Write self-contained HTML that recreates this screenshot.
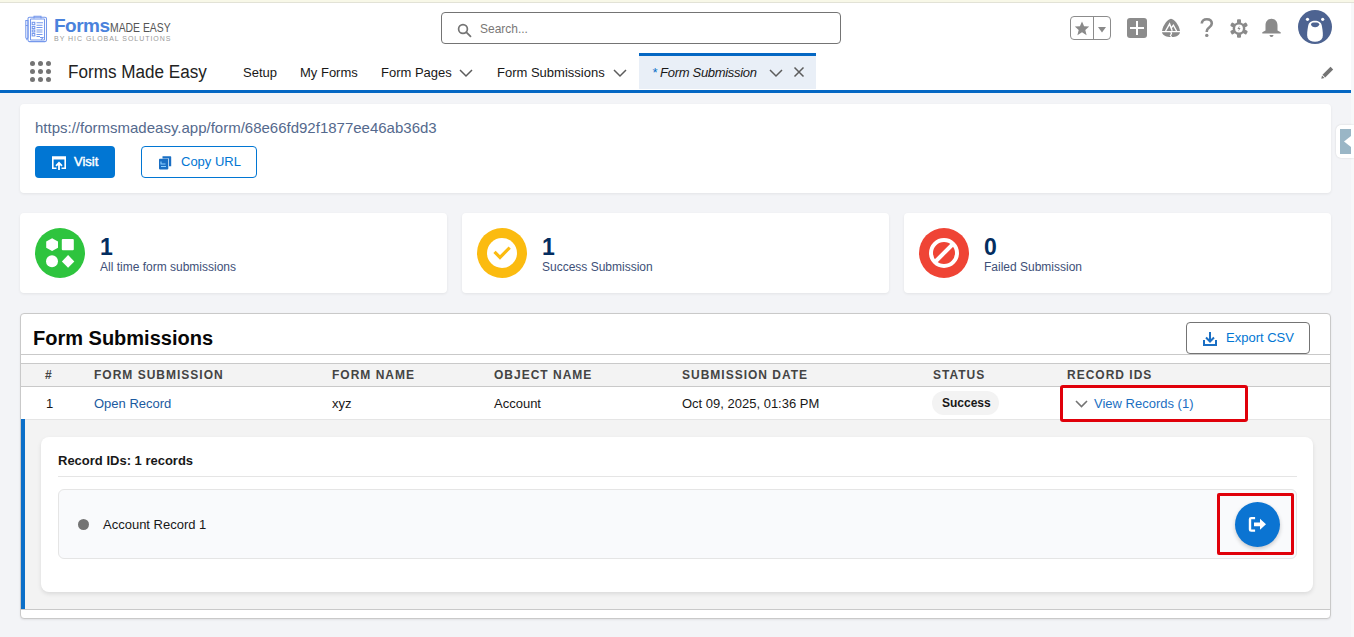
<!DOCTYPE html>
<html><head><meta charset="utf-8">
<style>
*{box-sizing:border-box;margin:0;padding:0}
html,body{width:1354px;height:637px;overflow:hidden}
body{font-family:"Liberation Sans",sans-serif;background:#f3f4f7;position:relative;color:#181818}
.abs{position:absolute}
svg{position:absolute;overflow:visible}
#topline{left:0;top:0;width:1354px;height:3px;background:#f8f8e8;border-bottom:1px solid #e2e2d6}
#header{left:0;top:3px;width:1351px;height:87px;background:#fff}
#blueline{left:0;top:90px;width:1351px;height:3px;background:#0467c3}
#rstrip{left:1351px;top:3px;width:3px;height:634px;background:#f7f8f9}
.card{background:#fff;border-radius:4px;box-shadow:0 1px 3px rgba(0,0,0,.07)}
.txt{white-space:nowrap;line-height:1}
.nav{font-size:13px;color:#181818;top:66px}
.th{font-size:12px;font-weight:bold;color:#444;letter-spacing:1px;top:369px}
.td{font-size:13px;color:#181818;top:397px}
.num{font-size:23px;font-weight:bold;color:#032d60;top:236px}
.lbl{font-size:12px;color:#3e5078;top:261px}
</style></head>
<body>
<div class="abs" id="topline"></div>
<div class="abs" id="header"></div>
<div class="abs" id="blueline"></div>
<div class="abs" id="rstrip"></div>

<!-- Logo icon -->
<svg style="left:24px;top:15px" width="24" height="28" viewBox="0 0 24 28">
  <g fill="none" stroke="#7598ec" stroke-width="1.05">
    <rect x="4" y="2.2" width="18.5" height="24.4" rx="1.5"/>
    <rect x="6.5" y="4" width="14" height="21" rx="0.5"/>
    <path d="M10 3.5 V1.2 H17 V3.5"/>
    <path d="M1.8 5.5 H4 V22.5 L2.9 24.5 L1.8 22.5 Z"/>
    <path d="M1.8 10.5 H4"/>
    <rect x="8.2" y="7.3" width="2.6" height="2.4"/>
    <rect x="8.2" y="11.5" width="2.6" height="2"/>
    <rect x="8.2" y="15" width="2.6" height="2"/>
    <rect x="8.2" y="18.5" width="2.6" height="2.4"/>
    <path d="M12.5 7.8 H19 M12.5 10.3 H18.5 M12.5 12.5 H18.5 M12.5 15 H18.5 M12.5 17 H18.5 M12.5 19.5 H18.5 M12.5 21.5 H16"/>
    <path d="M16 22.5 L19 22.5 L17 25"/>
  </g>
</svg>
<!-- Logo text -->
<div class="abs txt" style="left:54px;top:16px;font-size:19px;font-weight:bold;color:#4a82dc;letter-spacing:-0.5px">Forms</div>
<div class="abs txt" style="left:110px;top:21px;font-size:13px;color:#555;transform:scaleX(0.8);transform-origin:0 0">MADE EASY</div>
<div class="abs txt" style="left:54px;top:35px;font-size:7px;color:#9a9a9a;letter-spacing:0.96px">BY HIC GLOBAL SOLUTIONS</div>

<!-- Search -->
<div class="abs" style="left:441px;top:12px;width:400px;height:32px;border:1px solid #747474;border-radius:4px;background:#fff"></div>
<svg style="left:457px;top:23px" width="15" height="14" viewBox="0 0 15 14">
  <circle cx="6" cy="6" r="4.4" fill="none" stroke="#747474" stroke-width="1.7"/>
  <path d="M9.2 9.2 L13.5 13.3" stroke="#747474" stroke-width="1.8" stroke-linecap="round"/>
</svg>
<div class="abs txt" style="left:480px;top:22px;font-size:13px;color:#7a7876;transform:scaleX(0.92);transform-origin:0 0">Search...</div>

<!-- Header right icons -->
<div class="abs" style="left:1070px;top:16px;width:41px;height:24px;border:1px solid #8c8c8c;border-radius:4px"></div>
<div class="abs" style="left:1093px;top:16px;width:1px;height:24px;background:#8c8c8c"></div>
<svg style="left:1074px;top:21px" width="16" height="15" viewBox="0 0 16 15">
  <path d="M8 0.5 L10.1 5.3 L15.2 5.6 L11.3 8.9 L12.6 14.2 L8 11.3 L3.4 14.2 L4.7 8.9 L0.8 5.6 L5.9 5.3 Z" fill="#8a8a8a"/>
</svg>
<svg style="left:1098px;top:27px" width="8" height="6" viewBox="0 0 8 6"><path d="M0 0 H8 L4 5.5 Z" fill="#8a8a8a"/></svg>

<div class="abs" style="left:1127px;top:18px;width:20px;height:20px;background:#8c8c8c;border-radius:3px"></div>
<div class="abs" style="left:1136px;top:21px;width:2px;height:14px;background:#fff"></div>
<div class="abs" style="left:1130px;top:27px;width:14px;height:2px;background:#fff"></div>

<svg style="left:1161px;top:18px" width="20" height="20" viewBox="0 0 20 20">
  <path d="M10 0.8 C13.5 1.5 18 7 19 13 H1 C2 7 6.5 1.5 10 0.8 Z" fill="#8a8a8a"/>
  <path d="M1 14.2 H9.3 L9.8 15.8 L8.6 17.4 L10 19 C6 19 1.6 17.5 1 14.2 Z" fill="#8a8a8a"/>
  <path d="M10.6 14.2 H19 C18.4 17.5 14.5 19 11.2 19 L10 17.4 L11.2 15.8 Z" fill="#8a8a8a"/>
  <path d="M4.6 13 L8.6 6 L11.2 12.8 M10.2 10.2 L12.4 7.2 L15.6 13" fill="none" stroke="#fff" stroke-width="1.4"/>
</svg>

<svg style="left:1200px;top:18px" width="14" height="20" viewBox="0 0 14 20">
  <path d="M1.8 5.5 C1.8 2.8 3.8 1.3 6.8 1.3 C9.8 1.3 11.8 3 11.8 5.6 C11.8 8 10.2 8.9 8.6 10 C7.3 10.9 6.8 11.6 6.8 13.2 V14" fill="none" stroke="#8a8a8a" stroke-width="2.6"/>
  <circle cx="6.8" cy="17.4" r="1.7" fill="#8a8a8a"/>
</svg>

<svg style="left:1230px;top:19px" width="18" height="19" viewBox="0 0 18 19">
  <g fill="#8a8a8a">
    <circle cx="9" cy="9.5" r="6.3"/>
    <rect x="7" y="0.3" width="4" height="4" rx="1"/>
    <rect x="7" y="14.7" width="4" height="4" rx="1"/>
    <rect x="7" y="0.3" width="4" height="4" rx="1" transform="rotate(60 9 9.5)"/>
    <rect x="7" y="14.7" width="4" height="4" rx="1" transform="rotate(60 9 9.5)"/>
    <rect x="7" y="0.3" width="4" height="4" rx="1" transform="rotate(-60 9 9.5)"/>
    <rect x="7" y="14.7" width="4" height="4" rx="1" transform="rotate(-60 9 9.5)"/>
  </g>
  <circle cx="9" cy="9.5" r="3.9" fill="#fff"/>
  <path d="M9.6 6.5 L7.4 9.9 H9 L8.2 12.6 L10.6 9 H9.1 Z" fill="#8a8a8a"/>
</svg>

<svg style="left:1262px;top:18px" width="19" height="20" viewBox="0 0 19 20">
  <path d="M9.5 0.8 C5.8 0.8 3.5 3.6 3.5 7.5 V12.5 L0.3 14.2 V15.6 H18.7 V14.2 L15.5 12.5 V7.5 C15.5 3.6 13.2 0.8 9.5 0.8 Z" fill="#8a8a8a"/>
  <path d="M7.5 17 H11.5 C11.2 18.4 10.4 19 9.5 19 C8.6 19 7.8 18.4 7.5 17 Z" fill="#8a8a8a"/>
</svg>

<svg style="left:1298px;top:10px" width="34" height="34" viewBox="0 0 34 34">
  <circle cx="17" cy="17" r="17" fill="#4d6391"/>
  <circle cx="9.5" cy="9.3" r="1.6" fill="#fff"/>
  <circle cx="24.7" cy="9.3" r="1.6" fill="#fff"/>
  <path d="M17 10.8 C20.5 10.8 23.3 12.3 23.9 16 C24.7 21 25.3 25 24.5 27.5 C23.5 30.5 20.5 31.8 17 31.8 C13.5 31.8 10.5 30.5 9.5 27.5 C8.7 25 9.3 21 10.1 16 C10.7 12.3 13.5 10.8 17 10.8 Z" fill="#fff"/>
  <path d="M13 14.2 C13 12.8 15 12.4 17.1 12.4 C19.2 12.4 21.2 12.8 21.2 14.2 C21.2 15.8 19 17.3 17.1 17.3 C15.2 17.3 13 15.8 13 14.2 Z" fill="#4d6391"/>
</svg>

<!-- Nav -->
<svg style="left:30px;top:61px" width="22" height="21" viewBox="0 0 22 21">
  <g fill="#747474">
    <circle cx="2.5" cy="2.5" r="2.5"/><circle cx="10.5" cy="2.5" r="2.5"/><circle cx="18.5" cy="2.5" r="2.5"/>
    <circle cx="2.5" cy="10.5" r="2.5"/><circle cx="10.5" cy="10.5" r="2.5"/><circle cx="18.5" cy="10.5" r="2.5"/>
    <circle cx="2.5" cy="18.5" r="2.5"/><circle cx="10.5" cy="18.5" r="2.5"/><circle cx="18.5" cy="18.5" r="2.5"/>
  </g>
</svg>
<div class="abs txt" style="left:68px;top:63px;font-size:18px;color:#222;transform:scaleX(0.95);transform-origin:0 0">Forms Made Easy</div>
<div class="abs txt nav" style="left:243px">Setup</div>
<div class="abs txt nav" style="left:300px">My Forms</div>
<div class="abs txt nav" style="left:381px">Form Pages</div>
<svg style="left:459px;top:69px" width="14" height="8" viewBox="0 0 14 8"><path d="M1 1 L7 7 L13 1" fill="none" stroke="#5c5c5c" stroke-width="1.5"/></svg>
<div class="abs txt nav" style="left:497px">Form Submissions</div>
<svg style="left:613px;top:69px" width="14" height="8" viewBox="0 0 14 8"><path d="M1 1 L7 7 L13 1" fill="none" stroke="#5c5c5c" stroke-width="1.5"/></svg>
<div class="abs" style="left:639px;top:53px;width:177px;height:36px;background:#e9eff7;border-top:3px solid #0467c3"></div>
<div class="abs txt nav" style="left:652px;font-style:italic;letter-spacing:-0.3px"><span style="color:#0b6fc8">*</span> Form Submission</div>
<svg style="left:769px;top:69px" width="14" height="8" viewBox="0 0 14 8"><path d="M1 1 L7 7 L13 1" fill="none" stroke="#5c5c5c" stroke-width="1.5"/></svg>
<svg style="left:794px;top:67px" width="10" height="10" viewBox="0 0 10 10"><path d="M0.5 0.5 L9.5 9.5 M9.5 0.5 L0.5 9.5" stroke="#5c5c5c" stroke-width="1.5"/></svg>
<svg style="left:1321px;top:66px" width="13" height="13" viewBox="0 0 13 13">
  <path d="M9.5 0.8 L12.2 3.5 L4.2 11.5 L1.5 8.8 Z" fill="#747474"/>
  <path d="M1 9.5 L3.5 12 L0.3 12.7 Z" fill="#747474"/>
</svg>

<!-- URL card -->
<div class="abs card" style="left:20px;top:104px;width:1311px;height:89px"></div>
<div class="abs txt" style="left:35px;top:120px;font-size:15px;color:#54698d">https://formsmadeasy.app/form/68e66fd92f1877ee46ab36d3</div>
<div class="abs" style="left:35px;top:146px;width:80px;height:32px;background:#0176d3;border-radius:4px"></div>
<svg style="left:52px;top:156px" width="14" height="14" viewBox="0 0 14 14">
  <path d="M4.5 12.2 H0.8 V1 H13.2 V12.2 H9.5" fill="none" stroke="#fff" stroke-width="1.6"/>
  <path d="M0.8 1 H13.2 V3.5 H0.8 Z" fill="#fff"/>
  <path d="M7 14 V7.5 M4 9.8 L7 6.8 L10 9.8" fill="none" stroke="#fff" stroke-width="1.8"/>
</svg>
<div class="abs txt" style="left:74px;top:155px;font-size:13px;color:#fff;-webkit-text-stroke:0.45px #fff">Visit</div>
<div class="abs" style="left:141px;top:146px;width:116px;height:32px;border:1px solid #0176d3;border-radius:4px;background:#fff"></div>
<svg style="left:159px;top:156px" width="13" height="14" viewBox="0 0 13 14">
  <path d="M3.5 0.3 H11.5 Q12.2 0.3 12.2 1 V10.2 H10 V2.5 H3.5 Z" fill="#1a6fc4"/>
  <rect x="0" y="2.8" width="9.3" height="10.6" rx="0.8" fill="#1a6fc4"/>
  <path d="M2 5.5 V8 H6.5 M2 10.5 H7" stroke="#8fd0ff" stroke-width="1.1" fill="none"/>
</svg>
<div class="abs txt" style="left:181px;top:155px;font-size:13px;color:#0176d3">Copy URL</div>

<!-- side tab -->
<div class="abs" style="left:1336px;top:125px;width:18px;height:33px;background:#fff;border-radius:5px 0 0 5px;box-shadow:0 0 2px rgba(0,0,0,.15)"></div>
<div class="abs" style="left:1340px;top:129px;width:11px;height:25px;background:#9ab6c6"></div>
<svg style="left:1344px;top:136px" width="7" height="11" viewBox="0 0 7 11"><path d="M7 0 V11 L0 5.5 Z" fill="#fff"/></svg>

<!-- stats -->
<div class="abs card" style="left:20px;top:213px;width:427px;height:80px"></div>
<div class="abs card" style="left:462px;top:213px;width:427px;height:80px"></div>
<div class="abs card" style="left:904px;top:213px;width:427px;height:80px"></div>

<svg style="left:35px;top:228px" width="50" height="50" viewBox="0 0 50 50">
  <circle cx="25" cy="25" r="25" fill="#2ec43e"/>
  <path d="M17.1 10.3 L23 13.6 V19.8 L17.1 23 L11.2 19.8 V13.6 Z" fill="#fff"/>
  <rect x="26.8" y="11" width="12" height="11.3" rx="1" fill="#fff"/>
  <circle cx="17" cy="33.2" r="6" fill="#fff"/>
  <path d="M33.1 27.1 L39.3 33.4 L33.1 39.7 L26.9 33.4 Z" fill="#fff"/>
</svg>
<div class="abs txt num" style="left:100px">1</div>
<div class="abs txt lbl" style="left:100px">All time form submissions</div>

<svg style="left:477px;top:228px" width="50" height="50" viewBox="0 0 50 50">
  <circle cx="25" cy="25" r="25" fill="#fbbb10"/>
  <circle cx="25" cy="25" r="15" fill="#fff"/>
  <path d="M17.5 23.8 L23 29.4 L32.7 19.6" fill="none" stroke="#fbbb10" stroke-width="3.2"/>
</svg>
<div class="abs txt num" style="left:542px">1</div>
<div class="abs txt lbl" style="left:542px">Success Submission</div>

<svg style="left:919px;top:228px" width="50" height="50" viewBox="0 0 50 50">
  <circle cx="25" cy="25" r="25" fill="#ef4435"/>
  <circle cx="25" cy="25" r="13" fill="none" stroke="#fff" stroke-width="4"/>
  <path d="M33.5 16.5 L16.5 33.5" stroke="#fff" stroke-width="4"/>
</svg>
<div class="abs txt num" style="left:984px">0</div>
<div class="abs txt lbl" style="left:984px">Failed Submission</div>

<!-- Submissions card -->
<div class="abs" style="left:20px;top:313px;width:1311px;height:306px;background:#fff;border:1px solid #c9c9c9;border-radius:4px;box-shadow:0 1px 2px rgba(0,0,0,.08)"></div>
<div class="abs txt" style="left:33px;top:328px;font-size:20px;font-weight:bold;color:#080707">Form Submissions</div>
<div class="abs" style="left:1186px;top:322px;width:124px;height:32px;border:1px solid #747474;border-radius:4px;background:#fff"></div>
<svg style="left:1203px;top:332px" width="14" height="14" viewBox="0 0 14 14">
  <path d="M7 0 V9 M3 5.5 L7 9.5 L11 5.5" fill="none" stroke="#1a6fc4" stroke-width="2"/>
  <path d="M1 8 V13 H13 V8" fill="none" stroke="#1a6fc4" stroke-width="2"/>
</svg>
<div class="abs txt" style="left:1226px;top:331px;font-size:13px;color:#0176d3">Export CSV</div>
<div class="abs" style="left:21px;top:354px;width:1309px;height:1px;background:#c9c9c9"></div>

<!-- table -->
<div class="abs" style="left:21px;top:363px;width:1309px;height:24px;background:#f3f3f3;border-top:1px solid #c9c9c9;border-bottom:1px solid #c9c9c9"></div>
<div class="abs txt th" style="left:45px">#</div>
<div class="abs txt th" style="left:94px">FORM SUBMISSION</div>
<div class="abs txt th" style="left:332px">FORM NAME</div>
<div class="abs txt th" style="left:494px">OBJECT NAME</div>
<div class="abs txt th" style="left:682px">SUBMISSION DATE</div>
<div class="abs txt th" style="left:933px">STATUS</div>
<div class="abs txt th" style="left:1067px">RECORD IDS</div>

<div class="abs txt td" style="left:46px">1</div>
<div class="abs txt td" style="left:94px;color:#1b5aa0">Open Record</div>
<div class="abs txt td" style="left:332px">xyz</div>
<div class="abs txt td" style="left:494px">Account</div>
<div class="abs txt td" style="left:682px">Oct 09, 2025, 01:36 PM</div>
<div class="abs" style="left:932px;top:391px;width:67px;height:24px;background:#f3f3f3;border-radius:12px"></div>
<div class="abs txt" style="left:942px;top:397px;font-size:12px;font-weight:bold;color:#181818">Success</div>
<svg style="left:1075px;top:400px" width="13" height="8" viewBox="0 0 13 8"><path d="M1 1 L6.5 6.5 L12 1" fill="none" stroke="#747474" stroke-width="1.6"/></svg>
<div class="abs txt td" style="left:1094px;color:#1b6fc2">View Records (1)</div>

<!-- expanded -->
<div class="abs" style="left:21px;top:419px;width:1309px;height:191px;background:#f3f3f3;border-top:1px solid #e5e5e5;border-bottom:1px solid #c9c9c9"></div>
<div class="abs" style="left:21px;top:419px;width:4px;height:190px;background:#0b6fc8"></div>
<div class="abs" style="left:41px;top:437px;width:1272px;height:155px;background:#fff;border-radius:8px;box-shadow:0 2px 4px rgba(0,0,0,.1)"></div>
<div class="abs txt" style="left:58px;top:454px;font-size:13px;font-weight:bold;color:#181818">Record IDs: 1 records</div>
<div class="abs" style="left:58px;top:476px;width:1239px;height:1px;background:#e5e5e5"></div>
<div class="abs" style="left:58px;top:489px;width:1239px;height:70px;background:#f9fafc;border:1px solid #e5e5e5;border-radius:6px"></div>
<div class="abs" style="left:77.5px;top:519px;width:11px;height:11px;background:#747474;border-radius:50%"></div>
<div class="abs txt" style="left:103px;top:518px;font-size:13px;color:#181818">Account Record 1</div>
<div class="abs" style="left:1235px;top:502px;width:45px;height:45px;background:#0b74d2;border-radius:50%;box-shadow:0 2px 4px rgba(0,0,0,.2)"></div>
<svg style="left:1248px;top:516px" width="19" height="17" viewBox="0 0 19 17">
  <path d="M7.1 2.1 H3.2 Q2 2.1 2 3.3 V13.4 Q2 14.6 3.2 14.6 H7.1" fill="none" stroke="#fff" stroke-width="2.4"/>
  <path d="M6 6.4 H12 V2.8 L18 8.3 L12 13.8 V10.2 H6 Z" fill="#fff"/>
</svg>
<div class="abs" style="left:1217px;top:493px;width:77px;height:62px;border:3px solid #e0000a;border-radius:2px"></div>

<div class="abs" style="left:1060px;top:385px;width:188px;height:37px;border:3px solid #e0000a;border-radius:3px"></div>
</body></html>
